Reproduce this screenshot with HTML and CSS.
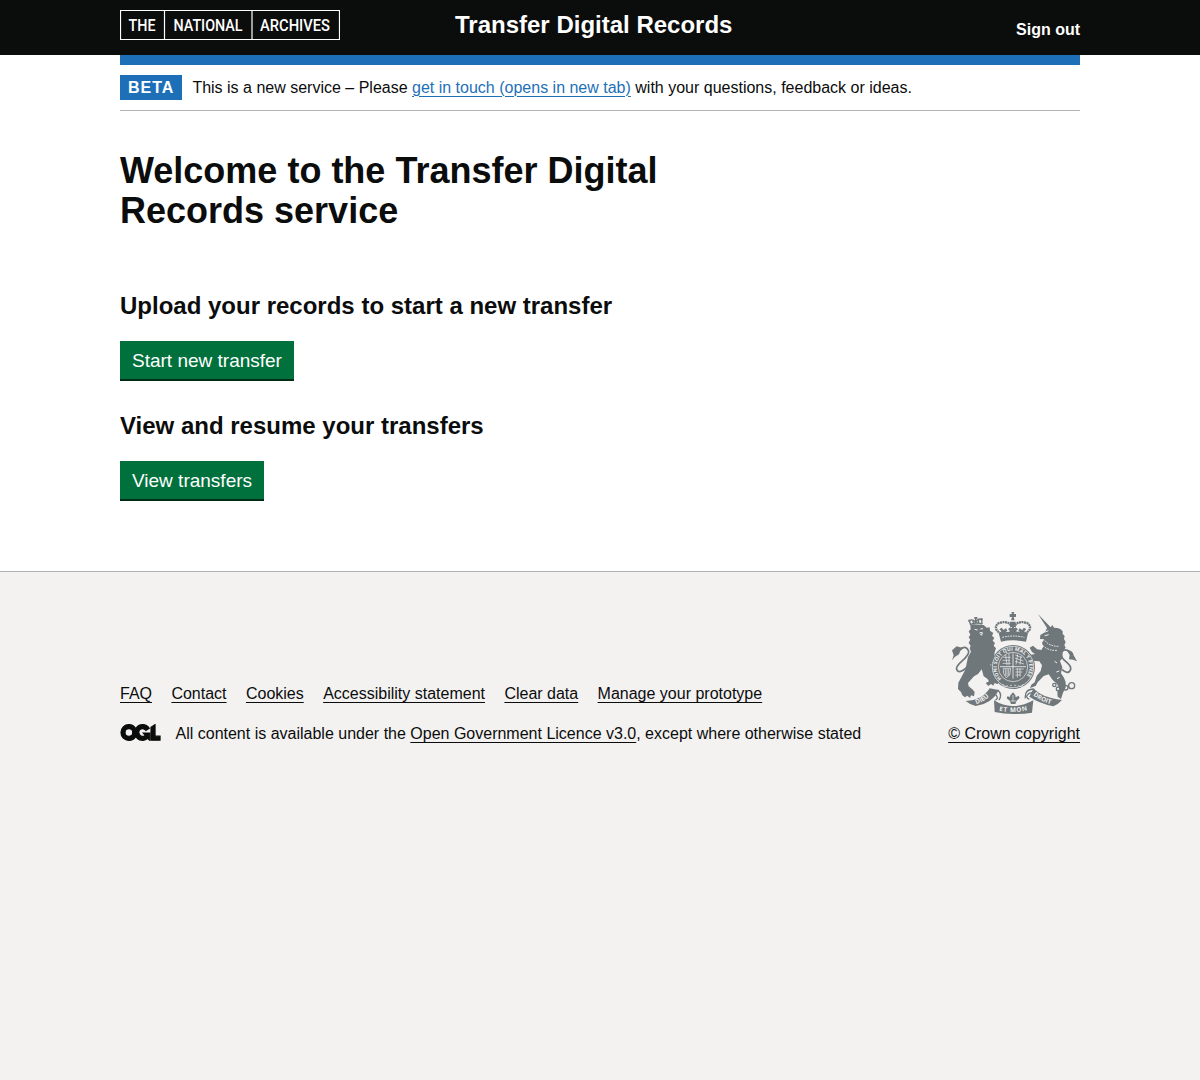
FILE: index.html
```html
<!DOCTYPE html>
<html lang="en">
<head>
<meta charset="utf-8">
<title>Transfer Digital Records</title>
<link rel="stylesheet" href="styles.css">
</head>
<body>
<header class="header">
  <div class="container header-row">
    <svg class="logo" width="220" height="30" viewBox="0 0 220 30" role="img" aria-label="The National Archives">
      <path d="M.5.5h219v29H.5zM44.5.5v29M132 .5v29" fill="none" stroke="#fff" stroke-width="1.2"/>
      <g class="logo-text">
        <text x="8.5" y="21" textLength="27" lengthAdjust="spacingAndGlyphs">THE</text>
        <text x="53.5" y="21" textLength="69" lengthAdjust="spacingAndGlyphs">NATIONAL</text>
        <text x="140" y="21" textLength="70" lengthAdjust="spacingAndGlyphs">ARCHIVES</text>
      </g>
    </svg>
    <span class="service-name">Transfer Digital Records</span>
    <a class="sign-out" href="#">Sign out</a>
  </div>
</header>
<div class="container">
  <div class="phase-banner">
    <strong class="tag">BETA</strong>
    <span>This is a new service – Please <a class="link" href="#">get in touch (opens in new tab)</a> with your questions, feedback or ideas.</span>
  </div>
  <main class="main">
    <h1 class="title">Welcome to the Transfer Digital Records service</h1>
    <h2 class="subtitle">Upload your records to start a new transfer</h2>
    <a class="button" href="#">Start new transfer</a>
    <h2 class="subtitle">View and resume your transfers</h2>
    <a class="button" href="#">View transfers</a>
  </main>
</div>
<footer class="footer">
  <div class="container footer-row">
    <div>
      <ul class="footer-links">
        <li><a href="#">FAQ</a></li>
        <li><a href="#">Contact</a></li>
        <li><a href="#">Cookies</a></li>
        <li><a href="#">Accessibility statement</a></li>
        <li><a href="#">Clear data</a></li>
        <li><a href="#">Manage your prototype</a></li>
      </ul>
      <div class="licence">
        <svg width="41" height="17" viewBox="-7 -7 497 210" aria-hidden="true"><path fill="currentColor" stroke="currentColor" stroke-width="14" d="M421.5 142.8V.1l-50.7 32.3v161.1h112.4v-50.7zm-122.3-9.6A47.12 47.12 0 0 1 221 97.8c0-26 21.1-47.1 47.1-47.1 16.7 0 31.4 8.7 39.7 21.8l42.7-27.2A97.63 97.63 0 0 0 268.1 0c-36.5 0-68.3 20.1-85.1 49.7A98 98 0 0 0 97.8 0C43.9 0 0 43.9 0 97.8s43.9 97.8 97.8 97.8c36.5 0 68.3-20.1 85.1-49.7a97.76 97.76 0 0 0 149.6 25.4l19.4 22.2h3v-87.8h-80l24.3 27.5zM97.8 145c-26 0-47.1-21.1-47.1-47.1s21.1-47.1 47.1-47.1 47.1 21.1 47.1 47.1S123.8 145 97.8 145"/></svg>
        <span>All content is available under the <a href="#">Open Government Licence v3.0</a>, except where otherwise stated</span>
      </div>
    </div>
    <a class="copyright" href="#">
      <svg class="crest" width="125" height="102" viewBox="36 36 375 306" aria-hidden="true">
        <defs>
          <path id="garter" d="M185 236A49 49 0 1 1 253 236"/>
          <path id="dieu" d="M108 313Q137 304 157 279"/>
          <path id="etmon" d="M173 331Q219 342 266 330"/>
          <path id="droit" d="M277 284Q302 306 342 315"/>
        </defs>
        <g fill="#6f777b">
          <!-- lion -->
          <path d="M91 76L101 73 121 74 131 75 140 83 149 82 150 92 160 99 156 107 163 114 158 122 165 129 161 137 168 145 164 157 162 174 161 190 150 194 162 205 168 220 162 229 168 235 175 243 173 253 164 249 160 257 153 252 145 258 137 249 147 244 142 236 131 229 125 208 114 222 102 229 92 240 84 249 86 259 97 268 104 276 102 289 93 286 90 294 82 287 75 292 67 286 63 276 54 267 55 248 66 228 77 207 80 190 84 171 93 155 89 145 92 138 86 128 91 119 86 112 91 104 86 94 92 88z"/>
          <path d="M36 181L41 166 36 151 50 139 70 145Q61 150 57 163 46 168 36 181z"/>
          <!-- unicorn -->
          <path d="M294 42L332 82 337 75 342 83 353 84 362 88 368 94 368 102 374 108 372 117 377 126 373 135 377 143 366 156 368 174 360 183 367 202 363 220 372 233 377 247 377 263 369 278 363 297 353 290 352 278 358 264 351 252 338 240 326 223 311 228 293 247 287 258 270 264 274 254 284 247 290 228 302 213 306 196 298 184 284 183 274 176 273 164 285 162 276 156 269 143 279 137 291 148 304 150 310 140 306 128 313 118 300 117 301 105 315 97 321 84z"/>
          <path d="M379 149Q400 151 401 166L411 184 400 179 387 178 389 165z"/>
          <!-- royal crown -->
          <path d="M176 99Q219 90 264 99L258 125Q219 117 183 125z"/>
          <path d="M214 36h9l-2 6h7v9h-7l3 10h-11l3-10h-7v-9h7zM210 65h17v14h-17zM216 75h6v25h-6z"/>
          <path d="M185 104l-2-12-5-4 7-5 6 7 7-6 4 8-6 5 2 8zM252 104l2-12 5-4-7-5-6 7-7-6-4 8 6 5-2 8zM208 101l1-9-5-5 8-5 7 6 7-6 8 5-5 5 1 9z"/>
          <!-- shield and garter -->
          <circle cx="219" cy="201" r="66"/>
          <!-- ribbons -->
          <path d="M77 303Q127 301 149 265L176 270Q159 309 107 318 91 315 77 303zM162 301Q191 319 219 318 247 319 280 301L276 338Q219 347 164 336zM281 265Q302 292 366 300 354 314 340 319 296 309 268 290z"/>
          <path d="M209 292Q211 284 219 277 227 284 227 292L236 287 239 294 230 302 226 312H213L209 302 200 295 203 288z"/>
        </g>
        <g fill="none" stroke="#6f777b" stroke-width="4">
          <path stroke-width="5" d="M56 150Q78 132 86 154C88 174 44 192 50 208 55 222 74 212 84 196M386 153Q366 142 364 166C366 184 396 190 392 208 388 222 376 218 366 208"/>
          <path stroke-width="7" stroke-dasharray="6 1.5" d="M184 100C164 94 162 73 181 68 199 63 213 70 214 81M254 100C274 94 276 73 257 68 239 63 225 70 224 81"/>
          <!-- lion's crown -->
          <path d="M92 75L88 62Q97 56 107 66 116 53 125 59L126 72M90 74Q107 65 126 72M107 53V68M98 61l3 9M117 60l-3 9"/>
          <path d="M103 54h9M85 62h6M122 58h6" stroke-width="6"/>
          <path d="M154 279Q164 278 169 286 176 297 166 300M284 279Q274 276 266 281 253 291 268 298M174 270Q188 285 177 300M281 267Q253 268 256 295"/>
          <circle cx="343" cy="255" r="5"/><circle cx="355" cy="267" r="6"/><circle cx="377" cy="263" r="7"/><circle cx="395" cy="257" r="9"/>
        </g>
        <g fill="none" stroke="#f3f2f1" stroke-width="2">
          <circle cx="219" cy="201" r="62"/><circle cx="219" cy="201" r="44"/>
          <path d="M219 160v76M180 200h78" stroke-width="2.5"/>
          <path stroke-width="2" d="M188 181l22 0M190 172h22M188 190h24M197 164l4 32M207 160v36M226 165l20 8M225 174l25 9M225 184l27 8M233 163l-5 31M243 168l-3 26M226 207h25M226 216h21M226 225h16M232 205v28M240 205v25M190 205h22l-3 20-10 8-8-12zM196 207v20M201 207v22M206 207v20"/>
          <path stroke-width="3" stroke-dasharray="5 3" d="M187 112Q219 104 253 112M315 122Q328 139 356 139M309 137Q325 153 352 151"/>
          <path stroke-width="3" d="M104 88l9 2M121 87l8-1M119 98l8 0-2 8-5-5M316 96l9-4M314 107l12-3M344 184l7 5M349 216l9-3M351 236l8-4"/>
          <path d="M188 252l5 9 11-4M250 252l-5 9-11-4M210 256h6M222 256h7"/>
          <path d="M219 285v19M211 303h17"/>
        </g>
        <g class="motto">
          <text><textPath href="#garter" textLength="222">HONI SOIT QUI MAL Y PENSE</textPath></text>
          <text class="ribbon"><textPath href="#dieu" startOffset="1">DIEU</textPath></text>
          <text class="ribbon"><textPath href="#etmon" textLength="86" startOffset="4">ET MON</textPath></text>
          <text class="ribbon"><textPath href="#droit" startOffset="3">DROIT</textPath></text>
        </g>
      </svg>
      <span>© Crown copyright</span>
    </a>
  </div>
</footer>
</body>
</html>
```
FILE: styles.css
```css
* { box-sizing: border-box; }
html { background: #f3f2f1; }
body {
  margin: 0;
  background: #fff;
  color: #0b0c0c;
  font: 16px/20px "Liberation Sans", Arial, sans-serif;
}
.container { width: 960px; margin: 0 auto; }
.header { height: 55px; background: #0b0c0c; color: #fff; }
.header-row {
  display: grid;
  grid-template-columns: 335px 1fr auto;
  align-items: start;
  height: 65px;
  padding-top: 10px;
  border-bottom: 10px solid #1d70b8;
}
.logo { display: block; }
.logo-text { fill: #fff; font: 500 16px Roboto, sans-serif; }
.service-name { font-size: 24px; font-weight: 700; line-height: 30px; }
.sign-out { padding-top: 10px; color: inherit; font-weight: 700; text-decoration: none; }
.phase-banner {
  display: flex;
  gap: 10.5px;
  align-items: center;
  height: 56px;
  padding-top: 10px;
  border-bottom: 1px solid #b1b4b6;
}
.tag { padding: 3px 7.5px 2px 8px; background: #1d70b8; color: #fff; letter-spacing: 1px; }
.link { color: #1d70b8; }
a { text-decoration-thickness: 1px; text-underline-offset: 0.1578em; }
.main { padding: 40px 0 70px; }
.title { width: 630px; margin: 0 0 60px; font-size: 36px; line-height: 40px; }
.subtitle { margin: 0 0 20px; font-size: 24px; line-height: 30px; }
.button {
  display: block;
  width: fit-content;
  margin-bottom: 32px;
  padding: 10px 12px 9px;
  background: #00703c;
  box-shadow: 0 2px 0 #002d18;
  color: #fff;
  font-size: 19px;
  line-height: 19px;
  text-decoration: none;
}
.button:last-child { margin-bottom: 2px; }
.footer { border-top: 1px solid #b1b4b6; background: #f3f2f1; padding: 40px 0 25px; }
.footer a { color: inherit; }
.footer-row { display: flex; justify-content: space-between; align-items: flex-end; }
.footer-links { display: flex; gap: 19.4px; margin: 0 0 20px; padding: 0; list-style: none; }
.licence { display: flex; gap: 14.5px; }
.copyright { display: flex; flex-direction: column; align-items: center; gap: 10px; }
.crest { display: block; }
.motto { fill: #f3f2f1; font: 700 15px "Open Sans", sans-serif; }
.ribbon { font-size: 19px; }
```
